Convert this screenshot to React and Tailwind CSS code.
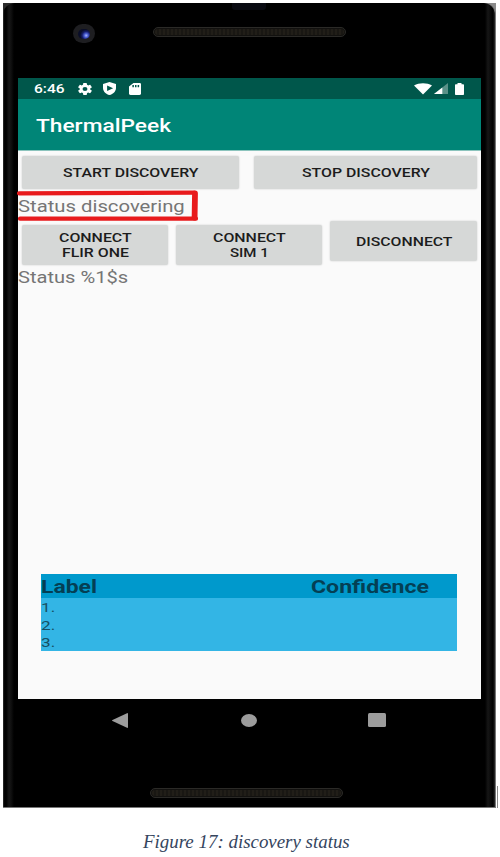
import { useLayoutEffect, useRef, useState } from "react";
import clsx from "clsx";

// Text on one line, widened so that it fills the width of its box.
function Wide({ className, children }) {
  const outer = useRef(null);
  const inner = useRef(null);
  const [scale, setScale] = useState(1.2);
  useLayoutEffect(() => {
    setScale(outer.current.clientWidth / inner.current.offsetWidth);
  }, [children]);
  return (
    <span ref={outer} className={clsx("block text-left whitespace-nowrap", className)}>
      <span ref={inner} className="inline-block origin-left align-top" style={{ transform: `scaleX(${scale})` }}>
        {children}
      </span>
    </span>
  );
}

function Button({ className, children }) {
  return (
    <button
      className={clsx(
        "flex flex-col items-center justify-center rounded-[2px] bg-[#d6d8d7] pl-px text-[13.5px] leading-[15px] font-medium text-[#1c1c1c] shadow-[0_0_2px_rgba(0,0,0,0.2)]",
        className,
      )}
    >
      {children}
    </button>
  );
}

function Speaker({ className }) {
  return (
    <div className={clsx("h-[10px] w-[193px] rounded-full border border-[#2b2a27] bg-[#12110f] p-px", className)}>
      <div className="h-full rounded-full bg-[repeating-linear-gradient(90deg,#211e18_0px,#211e18_2px,#191713_2px,#191713_4px)]" />
    </div>
  );
}

function StatusBar() {
  return (
    <div className="flex h-[21px] items-center bg-[#00574b] pl-[16px] pr-[17px] text-white">
      <Wide className="w-[31px] text-[13.5px] leading-[21px] font-medium">6:46</Wide>
      <svg className="ml-[13px] h-[12px] w-[14px]" viewBox="2 2 20 20" preserveAspectRatio="none" fill="currentColor">
        <path d="M19.43 12.98c.04-.32.07-.64.07-.98s-.03-.66-.07-.98l2.11-1.65c.19-.15.24-.42.12-.64l-2-3.46c-.12-.22-.39-.3-.61-.22l-2.49 1c-.52-.4-1.08-.73-1.69-.98l-.38-2.65A.49.49 0 0 0 14 2h-4c-.25 0-.46.18-.49.42l-.38 2.65c-.61.25-1.17.59-1.69.98l-2.49-1c-.23-.09-.49 0-.61.22l-2 3.46c-.13.22-.07.49.12.64l2.11 1.65c-.04.32-.07.65-.07.98s.03.66.07.98l-2.11 1.65c-.19.15-.24.42-.12.64l2 3.46c.12.22.39.3.61.22l2.49-1c.52.4 1.08.73 1.69.98l.38 2.65c.03.24.24.42.49.42h4c.25 0 .46-.18.49-.42l.38-2.65c.61-.25 1.17-.59 1.69-.98l2.49 1c.23.09.49 0 .61-.22l2-3.46c.12-.22.07-.49-.12-.64zM12 15.5A3.5 3.5 0 1 1 12 8.500a3.5 3.5 0 0 1 0 7z" />
      </svg>
      <svg className="ml-[11px] h-[13px] w-[13px]" viewBox="3 1 18 22" preserveAspectRatio="none" fill="currentColor">
        <path fillRule="evenodd" d="M12 1 3 4.500V11c0 5.550 3.840 10.500 9 12 5.160-1.500 9-6.450 9-12V4.500zM8.700 6.800v9.400L17 11.500z" />
      </svg>
      <svg className="ml-[12.5px] h-[12px] w-[12px]" viewBox="4 2 16 20" preserveAspectRatio="none" fill="currentColor">
        <path fillRule="evenodd" d="M18 2h-8L4 8v12c0 1.100.9 2 2 2h12c1.100 0 2-.9 2-2V4c0-1.100-.9-2-2-2zM8.500 5.500h2V9h-2zM12 5.500h2V9h-2zM15.500 5.500h2V9h-2z" />
      </svg>
      <svg className="ml-auto h-[12px] w-[18px]" viewBox="0 0 18 12" fill="currentColor">
        <path d="M0 2.600C5 -.6 13 -.6 18 2.600L9 11.600z" />
      </svg>
      <svg className="ml-[2px] h-[11px] w-[14px]" viewBox="0 0 14 11">
        <path d="M14 0v11H0z" fill="#5a9188" />
        <path d="M8.300 4.480V11H0z" fill="#fff" />
      </svg>
      <svg className="ml-[7.500px] h-[12px] w-[9px]" viewBox="0 0 9 12" fill="currentColor">
        <path d="M2.500 0h4v1.200H8.200a.8.8 0 0 1 .8.8v9.200a.8.8 0 0 1-.8.8H.8a.8.8 0 0 1-.8-.8V2a.8.8 0 0 1 .8-.8h1.700z" />
      </svg>
    </div>
  );
}

function AppScreen() {
  return (
    <div className="ml-[15px] flex h-[621px] w-[463px] flex-col bg-[#fafafa]">
      <StatusBar />
      <div className="flex h-[52px] shrink-0 items-center border-b border-[#8cc4bd] bg-[#008577] pl-[18px] text-white">
        <Wide className="w-[135px] pt-[2px] text-[18px] leading-[51px] font-medium">ThermalPeek</Wide>
      </div>
      <div className="flex gap-[15px] px-[4px] pt-[5px]">
        <Button className="h-[33px] w-[217px]">
          <Wide className="w-[136px]">START DISCOVERY</Wide>
        </Button>
        <Button className="h-[33px] w-[223px]">
          <Wide className="w-[128px]">STOP DISCOVERY</Wide>
        </Button>
      </div>
      <div className="relative h-[32px] text-[#757575]">
        <Wide className="w-[167px] pt-[1px] text-[17px] leading-[32px]">Status discovering</Wide>
        <svg className="absolute top-0 -left-[2px] h-[34px] w-[184px]" viewBox="0 0 184 34" fill="none" stroke="#e81a1c" strokeLinecap="round" strokeLinejoin="round">
          <path d="M3 4.300 178 3.700M4 29.700H180" strokeWidth="4.200" />
          <path d="M179 4.500 178.600 28.500" strokeWidth="5.800" />
        </svg>
      </div>
      <div className="flex items-start gap-[8px] px-[4px]">
        <Button className="mt-[4px] h-[40px] w-[146px]">
          <Wide className="w-[73px]">CONNECT</Wide>
          <Wide className="w-[67px]">FLIR ONE</Wide>
        </Button>
        <Button className="mt-[4px] h-[40px] w-[146px]">
          <Wide className="w-[73px]">CONNECT</Wide>
          <Wide className="w-[39px]">SIM 1</Wide>
        </Button>
        <Button className="h-[40px] w-[147px]">
          <Wide className="w-[97px]">DISCONNECT</Wide>
        </Button>
      </div>
      <Wide className="mt-[2px] w-[110px] text-[17px] leading-[20px] text-[#757575]">Status %1$s</Wide>
      <div className="mt-auto mb-[48px] ml-[23px] w-[416px] bg-[#33b5e5] text-[#165064]">
        <div className="flex h-[24px] bg-[#0099cc] text-[18px] leading-[25px] font-bold text-[#043f54]">
          <Wide className="w-[56px]">Label</Wide>
          <Wide className="ml-[213.5px] w-[117.5px]">Confidence</Wide>
        </div>
        <div className="h-[53px] pt-[1px] text-[13.5px] leading-[17.6px]">
          <Wide className="w-[14px]">1.</Wide>
          <Wide className="w-[14px]">2.</Wide>
          <Wide className="w-[14px]">3.</Wide>
        </div>
      </div>
    </div>
  );
}

export default function App() {
  return (
    <div className="flex h-[857px] w-[500px] flex-col overflow-hidden bg-white pt-[3px] pl-[3px] font-['Roboto',sans-serif]">
      <div className="flex">
        <div className="h-[805px] w-[493px] shrink-0 overflow-hidden bg-[linear-gradient(90deg,#2c2c2c_0px,#2c2c2c_50%,#8a8a8a_50%,#8a8a8a_100%)]">
          <div className="flex h-[805px] w-[493px] flex-col overflow-hidden rounded-t-[12px] border-r border-b border-[#777] bg-[linear-gradient(90deg,#444_0px,#050505_1px,#000_3px,#161616_6px,#101010_8px,#000_11px,#000_482px,#161616_485px,#0d0d0d_487px,#000_490px,#444_493px)]">
            <div className="flex h-[75px] shrink-0 items-start">
              <div className="mt-[21px] ml-[70px] flex h-[19px] w-[22px] items-center justify-center rounded-full bg-[#1e1e21]">
                <div className="h-[10px] w-[12px] rounded-full bg-[radial-gradient(circle_at_68%_65%,#a8b8ff_0px,#485bd0_2px,#151d68_4px,#090d28_6px)]" />
              </div>
              <Speaker className="mt-[24px] ml-[58px]" />
              <div className="-ml-[114px] h-[7px] w-[34px] rounded-b-[3px] bg-[#090a11]" />
            </div>
            <AppScreen />
            <div className="flex h-[89px] shrink-0 items-start pt-[14px] pl-[109px] text-[#9c9c9c]">
              <svg className="h-[15px] w-[16px]" viewBox="0 0 16 15" fill="currentColor">
                <path d="M15 .2q1-.4 1 .8v13q0 1.200-1 .8L.5 8q-1-.5 0-1z" />
              </svg>
              <div className="mt-[1px] ml-[113px] h-[13px] w-[16px] rounded-[50%] bg-[#9c9c9c]" />
              <div className="ml-[111px] h-[14px] w-[18px] rounded-[1.5px] bg-[#9c9c9c]" />
            </div>
            <Speaker className="ml-[147px]" />
          </div>
        </div>
        <div className="mt-[783px] ml-[1px] h-[22px] w-px bg-[#888]" />
      </div>
      <Wide className="mt-[22px] ml-[140px] w-[207px] font-['Liberation_Serif','Times_New_Roman',serif] text-[19px] leading-[24px] text-[#35455e] italic">
        Figure 17: discovery status
      </Wide>
    </div>
  );
}
